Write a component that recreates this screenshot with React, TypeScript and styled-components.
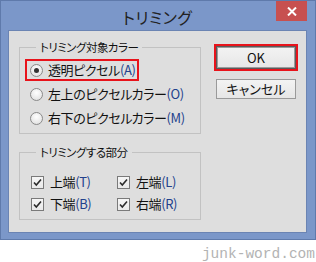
import React, { useState } from 'react'
import styled, { createGlobalStyle } from 'styled-components'

const GlobalStyle = createGlobalStyle`
  html, body {
    margin: 0;
    padding: 0;
    background: #ffffff;
  }
  body {
    font-family: "Noto Sans CJK JP", "Noto Sans", sans-serif;
    font-feature-settings: "palt";
  }
`

const Page = styled.div`
  width: 316px;
  height: 262px;
  display: flex;
  flex-direction: column;
  overflow: hidden;
`

const Window = styled.div`
  box-sizing: border-box;
  width: 316px;
  height: 241px;
  background: #7b97c9;
  border: 1px solid #5f7aab;
  display: flex;
  flex-direction: column;
  padding: 0 8px 6px 7px;
`

const TitleBar = styled.div`
  height: 29px;
  display: grid;
  grid-template-columns: 1fr auto 1fr;
  align-items: start;
`

const Title = styled.div`
  grid-column: 2;
  font-size: 16px;
  line-height: 16px;
  margin-top: 8px;
  color: #222;
  letter-spacing: 0.5px;
`

const CloseButton = styled.div`
  grid-column: 3;
  justify-self: end;
  width: 31px;
  height: 20px;
  background: #c75050;
  display: flex;
  align-items: center;
  justify-content: center;
`

const Client = styled.div`
  flex: 1;
  background: #dedede;
  border: 1px solid #6b84b3;
  display: flex;
  align-items: flex-start;
  padding: 9px 8px 0 10px;
`

const LeftColumn = styled.div`
  display: flex;
  flex-direction: column;
  gap: 11px;
`

const Group = styled.fieldset`
  box-sizing: border-box;
  width: 182px;
  margin: 0;
  border: 1px solid #c2c2c2;
  padding: 5px 4px 4px 5px;
  min-width: 0;
`

const Legend = styled.legend`
  font-size: 11.5px;
  line-height: 14px;
  letter-spacing: -0.5px;
  color: #111;
  padding: 0 4px;
  margin-left: 11px;
`

const OptionRow = styled.div<{ $highlight?: boolean }>`
  box-sizing: border-box;
  height: 22px;
  width: fit-content;
  display: flex;
  align-items: center;
  gap: 5px;
  padding: 0 2px 0 3px;
  border: 2px solid ${p => (p.$highlight ? '#e8131b' : 'transparent')};
  white-space: nowrap;
  & + & {
    margin-top: 2px;
  }
`

const Label = styled.span`
  font-size: 13px;
  line-height: 16px;
  letter-spacing: -0.4px;
  color: #111;
`

const Key = styled.span`
  color: #23418c;
`

const Radio = styled.span<{ $checked?: boolean }>`
  box-sizing: border-box;
  width: 13px;
  height: 13px;
  flex: none;
  border-radius: 50%;
  border: 1px solid #8a8a8a;
  background: radial-gradient(circle at 50% 35%, #ffffff 0%, #e6e6e6 70%, #d6d6d6 100%);
  display: flex;
  align-items: center;
  justify-content: center;
  &::after {
    content: '';
    width: 5px;
    height: 5px;
    border-radius: 50%;
    background: #333;
    display: ${p => (p.$checked ? 'block' : 'none')};
  }
`

const CheckGrid = styled.div`
  display: grid;
  grid-template-columns: 86px 80px;
  grid-auto-rows: 22px;
  padding: 7px 0 0 6px;
`

const CheckItem = styled.div`
  display: flex;
  align-items: center;
  gap: 6px;
  white-space: nowrap;
`

const CheckBox = styled.span`
  box-sizing: border-box;
  width: 13px;
  height: 13px;
  flex: none;
  border: 1px solid #7a7a7a;
  background: linear-gradient(#f6f6f6, #e9e9e9);
  display: flex;
  align-items: center;
  justify-content: center;
`

const RightColumn = styled.div`
  margin-left: 13px;
  margin-top: 4px;
  width: 84px;
  display: flex;
  flex-direction: column;
  align-items: center;
  gap: 8px;
`

const FocusFrame = styled.div`
  border: 2px solid #e8131b;
  display: flex;
`

const Button = styled.div<{ $default?: boolean }>`
  box-sizing: border-box;
  width: 80px;
  height: ${p => (p.$default ? '23px' : '20px')};
  border: 1px solid ${p => (p.$default ? '#5a5a5a' : '#9a9a9a')};
  box-shadow: ${p => (p.$default ? 'inset 0 0 0 1px #9b9b9b' : 'none')};
  background: linear-gradient(#f3f3f3, #e6e6e6);
  display: flex;
  align-items: center;
  justify-content: center;
  font-size: 13px;
  line-height: 14px;
  color: #111;
`

const Watermark = styled.div`
  flex: 1;
  text-align: right;
  font-family: "Liberation Mono", monospace;
  font-size: 14.5px;
  line-height: 16px;
  color: #b3b3b3;
  padding: 6px 1px 0 0;
`

const CheckMark = () => (
  <svg width="11" height="11" viewBox="0 0 11 11">
    <path d="M2 5.5 L4.3 8 L9 2.5" fill="none" stroke="#2b2b2b" strokeWidth="1.6" />
  </svg>
)

const options = [
  { text: '透明ピクセル', key: 'A' },
  { text: '左上のピクセルカラー', key: 'O' },
  { text: '右下のピクセルカラー', key: 'M' },
]

const parts = [
  { text: '上端', key: 'T' },
  { text: '左端', key: 'L' },
  { text: '下端', key: 'B' },
  { text: '右端', key: 'R' },
]

const App = () => {
  const [selected] = useState(0)

  return (
    <Page>
      <GlobalStyle />
      <Window>
        <TitleBar>
          <Title>トリミング</Title>
          <CloseButton>
            <svg width="10" height="9" viewBox="0 0 10 9">
              <path d="M1 0.5 L9 8.5 M9 0.5 L1 8.5" stroke="#fff" strokeWidth="2" />
            </svg>
          </CloseButton>
        </TitleBar>
        <Client>
          <LeftColumn>
            <Group>
              <Legend>トリミング対象カラー</Legend>
              {options.map((o, i) => (
                <OptionRow key={o.key} $highlight={i === 0}>
                  <Radio $checked={i === selected} />
                  <Label>
                    {o.text}<Key>({o.key})</Key>
                  </Label>
                </OptionRow>
              ))}
            </Group>
            <Group>
              <Legend>トリミングする部分</Legend>
              <CheckGrid>
                {parts.map(p => (
                  <CheckItem key={p.key}>
                    <CheckBox><CheckMark /></CheckBox>
                    <Label>
                      {p.text}<Key>({p.key})</Key>
                    </Label>
                  </CheckItem>
                ))}
              </CheckGrid>
            </Group>
          </LeftColumn>
          <RightColumn>
            <FocusFrame>
              <Button $default>OK</Button>
            </FocusFrame>
            <Button>キャンセル</Button>
          </RightColumn>
        </Client>
      </Window>
      <Watermark>junk-word.com</Watermark>
    </Page>
  )
}

export default App
